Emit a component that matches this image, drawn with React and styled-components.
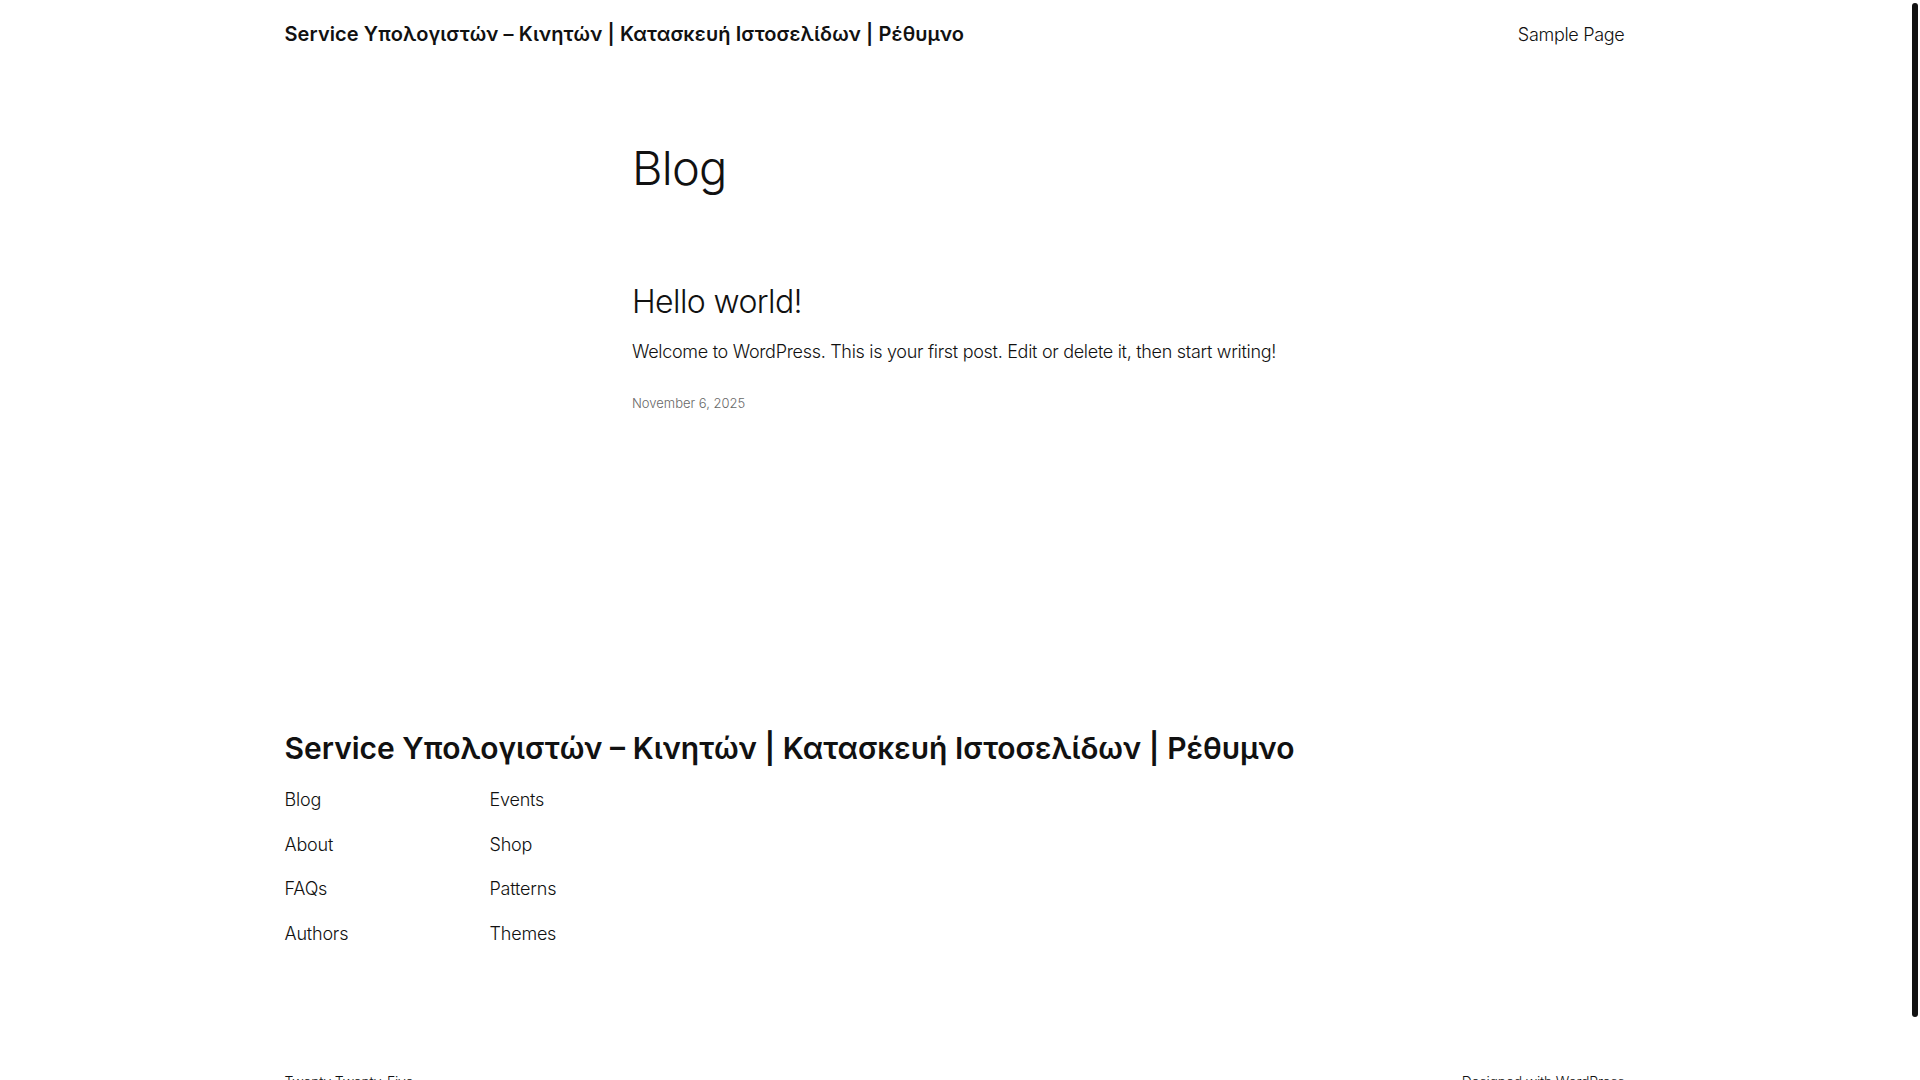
import React from "react";
import styled, { createGlobalStyle } from "styled-components";

const GlobalStyle = createGlobalStyle`
  html, body {
    margin: 0;
    padding: 0;
    background: #ffffff;
  }
  body {
    padding-right: 11px;
    font-family: Inter, "Noto Sans", "Liberation Sans", sans-serif;
    color: #111111;
    -webkit-font-smoothing: antialiased;
  }
  ::-webkit-scrollbar {
    width: 0;
  }
  a {
    color: inherit;
    text-decoration: none;
  }
`;

const siteName = "Service Υπολογιστών – Κινητών | Κατασκευή Ιστοσελίδων | Ρέθυμνο";

// the page's own scrollbar thumb, drawn over the right edge
const ScrollThumb = styled.div`
  position: fixed;
  top: 3px;
  right: 2px;
  width: 6px;
  height: 1014px;
  border-radius: 3px;
  background: #111111;
`;

const Wide = styled.div`
  max-width: 1340px;
  margin: 0 auto;
`;

const HeaderBar = styled.header`
  height: 68px;
  display: flex;
  align-items: center;
  justify-content: space-between;
`;

const SiteTitle = styled.a`
  font-size: ${(p) => (p.big ? "30px" : "20px")};
  font-weight: 600;
  letter-spacing: ${(p) => (p.big ? "0px" : "0.1px")};
  line-height: ${(p) => (p.big ? "36px" : "28px")};
  display: block;
`;

const NavLink = styled.a`
  font-size: 18px;
  font-weight: 300;
  letter-spacing: -0.3px;
`;

const Main = styled.main`
  width: 645px;
  margin: 0 auto;
  padding-top: 74px;
`;

const PageTitle = styled.h1`
  margin: 0;
  font-size: 47px;
  line-height: 52px;
  font-weight: 300;
  letter-spacing: -0.8px;
`;

const Post = styled.article`
  margin-top: 89px;
`;

const PostTitle = styled.h2`
  margin: 0;
  font-size: 32px;
  line-height: 38px;
  font-weight: 300;
  letter-spacing: -0.6px;
`;

const Excerpt = styled.p`
  margin: 18px 0 0;
  font-size: 18px;
  line-height: 25px;
  font-weight: 300;
  letter-spacing: -0.3px;
`;

const PostDate = styled.time`
  display: block;
  margin-top: 30px;
  font-size: 13px;
  line-height: 18px;
  font-weight: 300;
  letter-spacing: 0;
  color: #686868;
`;

const Footer = styled.footer`
  padding-top: 318px;
  padding-bottom: 58px;
`;

const LinkGrid = styled.nav`
  margin-top: 21px;
  display: grid;
  grid-template-columns: 205px 205px;
  grid-auto-flow: column;
  grid-template-rows: repeat(4, 25px);
  row-gap: 19.5px;
`;

const FooterLink = styled.a`
  font-size: 18px;
  line-height: 25px;
  font-weight: 300;
  letter-spacing: -0.2px;
`;

const Credits = styled.div`
  margin-top: 126px;
  display: flex;
  justify-content: space-between;
  font-size: 14px;
  line-height: 20px;
  font-weight: 300;
  letter-spacing: -0.2px;
`;

const footerLinks = [
  ["Blog", "About", "FAQs", "Authors"],
  ["Events", "Shop", "Patterns", "Themes"],
];

export default function App() {
  return (
    <>
      <GlobalStyle />
      <Wide>
        <HeaderBar>
          <SiteTitle href="#">{siteName}</SiteTitle>
          <NavLink href="#">Sample Page</NavLink>
        </HeaderBar>
      </Wide>

      <Main>
        <PageTitle>Blog</PageTitle>
        <Post>
          <PostTitle>Hello world!</PostTitle>
          <Excerpt>
            Welcome to WordPress. This is your first post. Edit or delete it, then start writing!
          </Excerpt>
          <PostDate>November 6, 2025</PostDate>
        </Post>
      </Main>

      <Wide>
        <Footer>
          <SiteTitle big href="#">{siteName}</SiteTitle>
          <LinkGrid>
            {footerLinks.flat().map((l) => (
              <FooterLink key={l} href="#">{l}</FooterLink>
            ))}
          </LinkGrid>
          <Credits>
            <span>Twenty Twenty-Five</span>
            <span>Designed with WordPress</span>
          </Credits>
        </Footer>
      </Wide>

      <ScrollThumb />
    </>
  );
}
